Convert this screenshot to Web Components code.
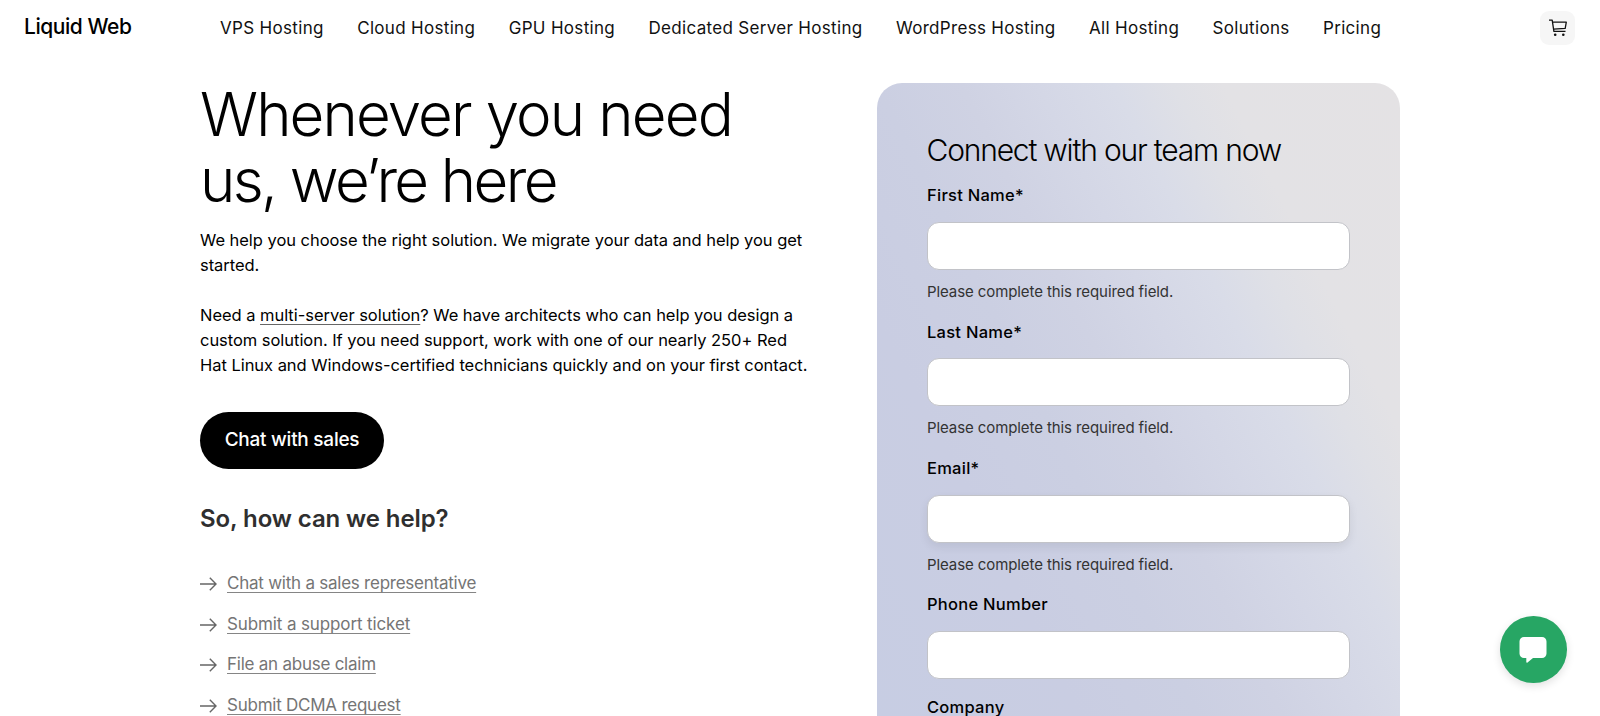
<!DOCTYPE html>
<html lang="en">
<head>
<meta charset="utf-8">
<title>Liquid Web</title>
<style>
  * { box-sizing: border-box; }
  body {
    margin: 0;
    height: 716px;
    overflow: hidden;
    background: #fff;
    color: #000;
    font-family: Inter, "Liberation Sans", sans-serif;
  }
  main {
    display: flex;
    justify-content: space-between;
    align-items: flex-start;
    width: 1200px;
    height: 660px;
    margin: 0 auto;
    padding-top: 27px;
  }
</style>
</head>
<body>
  <site-header></site-header>
  <main>
    <contact-intro>
      <pill-button>Chat with sales</pill-button>
      <h2 slot="links-title">So, how can we help?</h2>
      <arrow-link slot="links">Chat with a sales representative</arrow-link>
      <arrow-link slot="links" style="--link-spacing: -0.12px">Submit a support ticket</arrow-link>
      <arrow-link slot="links">File an abuse claim</arrow-link>
      <arrow-link slot="links">Submit DCMA request</arrow-link>
    </contact-intro>
    <contact-form heading="Connect with our team now">
      <form-field label="First Name*" error="Please complete this required field."></form-field>
      <form-field label="Last Name*" error="Please complete this required field."></form-field>
      <form-field label="Email*" error="Please complete this required field." raised></form-field>
      <form-field label="Phone Number"></form-field>
      <form-field label="Company"></form-field>
    </contact-form>
  </main>
  <chat-launcher></chat-launcher>

<script>
class SiteHeader extends HTMLElement {
  constructor() {
    super();
    this.attachShadow({ mode: 'open' });
    this.items = [
      'VPS Hosting', 'Cloud Hosting', 'GPU Hosting', 'Dedicated Server Hosting',
      'WordPress Hosting', 'All Hosting', 'Solutions', 'Pricing'
    ];
  }

  connectedCallback() {
    this.shadowRoot.innerHTML = `
      <style>
        :host {
          display: flex;
          align-items: center;
          height: 56px;
          padding: 0 25px 0 24px;
          box-sizing: border-box;
        }
        .logo {
          width: 196px;
          font-size: 21px;
          font-weight: 500;
          letter-spacing: -0.45px;
          padding-bottom: 3px;
        }
        nav {
          display: flex;
          flex: 1;
          gap: 33.4px;
          padding-bottom: 1px;
          font-size: 17px;
          letter-spacing: 0.32px;
          white-space: nowrap;
        }
        a { color: #111; }
        .cart {
          display: flex;
          align-items: center;
          justify-content: center;
          width: 35px;
          height: 34px;
          border-radius: 9px;
          background: #f6f6f6;
        }
      </style>
      <div class="logo">Liquid Web</div>
      <nav>${this.items.map(item => `<a>${item}</a>`).join('')}</nav>
      <div class="cart">
        <svg width="20" height="18" viewBox="0 0 20 18" fill="none" stroke="#111" stroke-width="1.3" stroke-linejoin="round">
          <path d="M1 1.2h3.2l1.7 11.1h11.6M4.5 3.2h13.8l-1.1 6.1-11.6.8"/>
          <circle cx="7.2" cy="15.7" r="1.3" fill="#111" stroke="none"/>
          <circle cx="15.3" cy="15.7" r="1.3" fill="#111" stroke="none"/>
        </svg>
      </div>
    `;
  }
}

class ContactIntro extends HTMLElement {
  constructor() {
    super();
    this.attachShadow({ mode: 'open' });
  }

  connectedCallback() {
    this.shadowRoot.innerHTML = `
      <style>
        :host {
          display: block;
          width: 625px;
          margin-top: -2px;
        }
        h1 {
          margin: 0 0 15px;
          font-size: 60px;
          font-weight: 300;
          line-height: 66px;
          letter-spacing: -1.85px;
        }
        h1 .tight { letter-spacing: -2.6px; }
        p {
          margin: 0 0 25px;
          font-size: 16.5px;
          line-height: 25px;
          letter-spacing: -0.04px;
          white-space: nowrap;
        }
        a {
          padding-bottom: 0;
          text-decoration: underline 1px #666;
          text-underline-offset: 3px;
          text-decoration-skip-ink: none;
        }
        .action { margin-top: 34px; }
        ::slotted(h2) {
          margin: 35px 0 37.5px;
          font-size: 24px;
          font-weight: 600;
          line-height: 30px;
          letter-spacing: -0.1px;
          color: #2f2f2f;
        }
        .links {
          display: flex;
          flex-direction: column;
          gap: 16.6px;
        }
      </style>
      <h1>Whenever you need<br><span class="tight">us, we’re here</span></h1>
      <p>We help you choose the right solution. We migrate your data and help you get<br>started.</p>
      <p>Need a <a>multi-server solution</a>? We have architects who can help you design a<br>custom solution. If you need support, work with one of our nearly 250+ Red<br>Hat Linux and Windows-certified technicians quickly and on your first contact.</p>
      <div class="action"><slot></slot></div>
      <slot name="links-title"></slot>
      <div class="links"><slot name="links"></slot></div>
    `;
  }
}

class PillButton extends HTMLElement {
  constructor() {
    super();
    this.attachShadow({ mode: 'open' });
    this.shadowRoot.innerHTML = `
      <style>
        :host { display: block; }
        button {
          display: block;
          width: 184px;
          height: 56.5px;
          padding: 0 0 2px;
          border: none;
          border-radius: 29px;
          background: #000;
          color: #fff;
          font: 500 19px Inter, "Liberation Sans", sans-serif;
          letter-spacing: -0.25px;
        }
      </style>
      <button><slot></slot></button>
    `;
  }
}

class ArrowLink extends HTMLElement {
  constructor() {
    super();
    this.attachShadow({ mode: 'open' });
    this.shadowRoot.innerHTML = `
      <style>
        :host {
          display: flex;
          align-items: center;
          gap: 10px;
          height: 24px;
          color: #757575;
        }
        a {
          font-size: 17px;
          line-height: 24px;
          letter-spacing: var(--link-spacing, -0.24px);
          text-decoration: underline 1px #858585;
          text-underline-offset: 3px;
          text-decoration-skip-ink: none;
        }
        svg { margin-top: 2px; }
      </style>
      <svg width="17" height="14" viewBox="0 0 17 14" fill="none" stroke="#666" stroke-width="1.4">
        <path d="M0 7h16M9.800 .8 16 7l-6.200 6.200"/>
      </svg>
      <a><slot></slot></a>
    `;
  }
}

class ContactForm extends HTMLElement {
  constructor() {
    super();
    this.attachShadow({ mode: 'open' });
  }

  connectedCallback() {
    this.shadowRoot.innerHTML = `
      <style>
        :host {
          display: block;
          box-sizing: border-box;
          width: 523px;
          height: 633px;
          padding: 49px 50px 0;
          overflow: hidden;
          border-radius: 25px 25px 0 0;
          background: linear-gradient(63deg, #c7cde3 0%, #c9cde2 24%, #cbcfe2 38%, #cfd2e3 48%, #d4d7e6 57%, #d9dce8 66%, #dfe0e6 73%, #e3e2e5 79%, #e4e2e4 100%);
        }
        h3 {
          margin: 0 0 15.3px -0.5px;
          font-size: 30px;
          font-weight: 300;
          line-height: 36px;
          letter-spacing: -1.2px;
          white-space: nowrap;
        }
      </style>
      <h3>${this.getAttribute('heading')}</h3>
      <slot></slot>
    `;
  }
}

class FormField extends HTMLElement {
  constructor() {
    super();
    this.attachShadow({ mode: 'open' });
  }

  connectedCallback() {
    const error = this.getAttribute('error');
    this.shadowRoot.innerHTML = `
      <style>
        :host {
          display: block;
          margin-bottom: 15.7px;
        }
        :host([error]) { margin-bottom: 17.7px; }
        label {
          display: block;
          margin-bottom: 14.7px;
          font-size: 16.5px;
          font-weight: 500;
          line-height: 24px;
          letter-spacing: 0.26px;
        }
        input {
          display: block;
          box-sizing: border-box;
          width: 100%;
          height: 48px;
          padding: 0 12px;
          border: 1px solid #c2c3c8;
          border-radius: 12px;
          background: #fff;
        }
        :host([raised]) input { box-shadow: 0 4px 10px rgba(0, 0, 0, 0.07); }
        .error {
          margin-top: 12px;
          font-size: 15px;
          line-height: 20px;
          letter-spacing: -0.09px;
          color: #333;
        }
      </style>
      <label>${this.getAttribute('label')}</label>
      <input type="text">
      ${error ? `<div class="error">${error}</div>` : ''}
    `;
  }
}

class ChatLauncher extends HTMLElement {
  constructor() {
    super();
    this.attachShadow({ mode: 'open' });
    this.shadowRoot.innerHTML = `
      <style>
        :host {
          position: fixed;
          right: 33.5px;
          bottom: 33.5px;
          display: flex;
          align-items: center;
          justify-content: center;
          width: 66.5px;
          height: 66.5px;
          border-radius: 50%;
          background: #27a664;
          box-shadow: 0 3px 8px rgba(0, 0, 0, 0.12);
        }
        svg { margin-top: 1px; }
      </style>
      <svg width="28" height="26" viewBox="0 0 28 26" fill="#fff">
        <path d="M5 0h18a4.500 4.500 0 0 1 4.500 4.500v12a4.500 4.500 0 0 1-4.500 4.500H14l-5.500 4.600c-.6.5-1.200.2-1.200-.6v-4H5A4.500 4.500 0 0 1 .5 16.500v-12A4.500 4.500 0 0 1 5 0z"/>
      </svg>
    `;
  }
}

customElements.define('site-header', SiteHeader);
customElements.define('contact-intro', ContactIntro);
customElements.define('pill-button', PillButton);
customElements.define('arrow-link', ArrowLink);
customElements.define('contact-form', ContactForm);
customElements.define('form-field', FormField);
customElements.define('chat-launcher', ChatLauncher);
</script>
</body>
</html>
